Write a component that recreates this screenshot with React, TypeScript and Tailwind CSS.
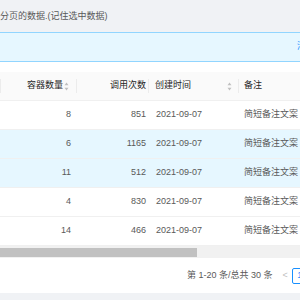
import React from 'react';

const rows = [
  { count: 8, calls: 851, date: '2021-09-07', note: '简短备注文案', selected: false },
  { count: 6, calls: 1165, date: '2021-09-07', note: '简短备注文案', selected: true },
  { count: 11, calls: 512, date: '2021-09-07', note: '简短备注文案', selected: true },
  { count: 4, calls: 830, date: '2021-09-07', note: '简短备注文案', selected: false },
  { count: 14, calls: 466, date: '2021-09-07', note: '简短备注文案', selected: false },
];

const SortIcon = () => (
  <svg width="5" height="9" viewBox="0 0 5 9" className="shrink-0">
    <path d="M2.5 0.5 L4.5 3.3 L0.5 3.3 Z" fill="#bfbfbf" />
    <path d="M2.5 8.5 L4.5 5.7 L0.5 5.7 Z" fill="#bfbfbf" />
  </svg>
);

const Divider = () => <div className="w-px h-[14px] bg-[#ececec] shrink-0" />;

export default function App() {
  return (
    <div
      className="w-[300px] h-[300px] overflow-hidden bg-white text-[9px] text-[#595959]"
      style={{ fontFamily: '"Liberation Sans", "Noto Sans CJK SC", sans-serif' }}
    >
      {/* 标题 */}
      <div className="h-[32px] bg-[#f0f2f5] flex items-center pt-[2px] whitespace-nowrap">
        分页的数据.(记住选中数据)
      </div>

      {/* 提示条 */}
      <div className="h-[30px] border-y border-[#91d5ff] bg-[#e6f7ff] flex items-center justify-end">
        <span className="w-[3px] overflow-hidden whitespace-nowrap text-[#1890ff]">清空</span>
      </div>

      <div className="pt-[10px]">
        {/* 表头 */}
        <div className="h-[29px] bg-[#fafafa] border-b border-[#f0f0f0] flex items-center text-[#262626] whitespace-nowrap">
          <Divider />
          <div className="w-[75px] flex items-center justify-end gap-[1px] pr-[7px]">
            <span>容器数量</span>
            <SortIcon />
          </div>
          <Divider />
          <div className="w-[71px] flex justify-end pr-[2px]">调用次数</div>
          <Divider />
          <div className="w-[89px] flex items-center justify-between pl-[6px] pr-[6px]">
            <span>创建时间</span>
            <SortIcon />
          </div>
          <Divider />
          <div className="flex-1 pl-[5px]">备注</div>
        </div>

        {/* 数据行 */}
        {rows.map((r, i) => (
          <div
            key={i}
            className={`h-[29px] border-b border-[#f0f0f0] flex items-center whitespace-nowrap ${
              r.selected ? 'bg-[#e6f7ff]' : 'bg-white'
            }`}
          >
            <div className="w-[77px] text-right pr-[6px]">{r.count}</div>
            <div className="w-[72px] text-right pr-[3px]">{r.calls}</div>
            <div className="w-[90px] pl-[7px]">{r.date}</div>
            <div className="flex-1 pl-[5px]">{r.note}</div>
          </div>
        ))}

        {/* 横向滚动条 */}
        <div className="h-[12px] bg-[#f1f1f1] pt-[2px]">
          <div className="w-[197px] h-[9px] bg-[#c1c1c1]" />
        </div>

        {/* 分页 */}
        <div className="h-[35px] flex items-center pl-[187px] whitespace-nowrap">
          <span>第 1-20 条/总共 30 条</span>
          <span className="ml-[10px] text-[#bfbfbf]">&lt;</span>
          <span className="ml-[4px] h-[16px] min-w-[16px] border border-[#1890ff] rounded-[2px] text-[#1890ff] flex items-center justify-center shrink-0">
            1
          </span>
        </div>

        <div className="h-[10px] bg-[#f0f2f5]" />
      </div>
    </div>
  );
}
